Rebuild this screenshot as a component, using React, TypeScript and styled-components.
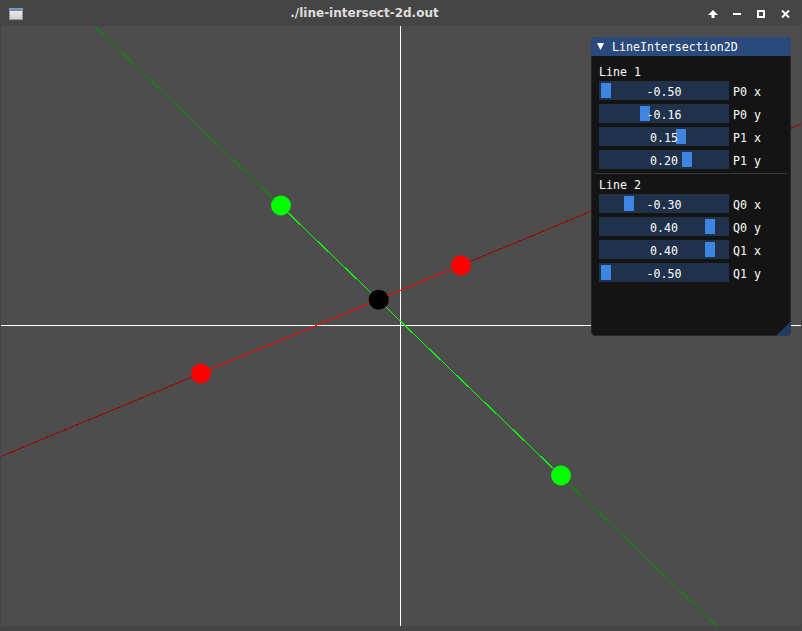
import React from "react";
import styled, { createGlobalStyle } from "styled-components";

const GlobalStyle = createGlobalStyle`
  html, body { margin: 0; padding: 0; background: #454545; overflow: hidden; }
  #root { width: 802px; height: 631px; }
  * { box-sizing: border-box; }
`;

const Window = styled.div`
  width: 802px;
  height: 631px;
  display: flex;
  flex-direction: column;
  background: #454545;
`;

const TitleBar = styled.div`
  height: 26px;
  display: grid;
  grid-template-columns: 28px 1fr auto;
  align-items: center;
  padding-right: 5px;
`;

const IconSlot = styled.div`
  display: flex;
  align-items: center;
  padding-left: 9px;
  height: 26px;
`;

const TitleText = styled.div`
  text-align: center;
  font-family: "DejaVu Sans", "Liberation Sans", sans-serif;
  font-weight: bold;
  font-size: 12px;
  color: #dedede;
  line-height: 26px;
  padding-bottom: 2px;
`;

const Buttons = styled.div`
  display: flex;
  height: 26px;
`;

const TitleButton = styled.div`
  width: 24px;
  height: 26px;
  display: flex;
  align-items: center;
  justify-content: center;
  padding-bottom: 1px;
`;

const Body = styled.div`
  display: flex;
  padding: 0 1px 5px 1px;
`;

const Canvas = styled.div`
  position: relative;
  width: 800px;
  height: 600px;
  background: #4d4d4d;
  overflow: hidden;
`;

const Plot = styled.svg`
  display: block;
  width: 800px;
  height: 600px;
`;

const Panel = styled.div`
  position: absolute;
  left: 590px;
  top: 11px;
  width: 200px;
  height: 299px;
  background: #141414;
  border-radius: 5px;
  overflow: hidden;
  display: flex;
  flex-direction: column;
  font-family: "DejaVu Sans Mono", "Liberation Mono", monospace;
  font-size: 11.6px;
  color: #ffffff;
  box-shadow: inset 0 0 0 1px #26262b;
`;

const PanelTitle = styled.div`
  height: 19px;
  background: #294a7a;
  display: flex;
  align-items: center;
  padding-left: 6px;
  gap: 8px;
  white-space: pre;
`;

const TitleLabel = styled.span`
  line-height: 19px;
  padding-top: 2px;
`;

const PanelContent = styled.div`
  display: flex;
  flex-direction: column;
  gap: 4px;
  padding: 8px 8px 0 8px;
`;

const SectionLabel = styled.div`
  height: 13px;
  line-height: 13px;
  padding-top: 2px;
  white-space: pre;
  overflow: visible;
`;

const Separator = styled.div`
  height: 1px;
  margin: 0 -4px -1px -4px;
  background: #37373d;
`;

const SliderRow = styled.div`
  display: flex;
  align-items: center;
  gap: 4px;
  height: 19px;
`;

const SliderFrame = styled.div`
  position: relative;
  width: 130px;
  height: 19px;
  background: #1f314b;
`;

const Grab = styled.div`
  position: absolute;
  top: 2px;
  width: 10px;
  height: 15px;
  background: #3d85e0;
`;

const SliderValue = styled.div`
  position: relative;
  text-align: center;
  height: 19px;
  line-height: 19px;
  padding-top: 2px;
  white-space: pre;
`;

const SliderLabel = styled.div`
  white-space: pre;
  height: 19px;
  line-height: 19px;
  padding-top: 2px;
`;

const ResizeGrip = styled.div`
  position: absolute;
  right: 0;
  bottom: 0;
  width: 0;
  height: 0;
  border-left: 15px solid transparent;
  border-bottom: 15px solid #223b5e;
`;

type SliderProps = { value: number; label: string };

const Slider: React.FC<SliderProps> = ({ value, label }) => {
  const t = (value + 0.5) / 1.0;
  const left = 2 + t * 116;
  return (
    <SliderRow>
      <SliderFrame>
        <Grab style={{ left: `${left}px` }} />
        <SliderValue>{value.toFixed(2)}</SliderValue>
      </SliderFrame>
      <SliderLabel>{label}</SliderLabel>
    </SliderRow>
  );
};

type V = { x: number; y: number };
const toX = (x: number) => 399.5 + x * 400;
const toY = (y: number) => 299.5 - y * 300;

const P0: V = { x: -0.5, y: -0.16 };
const P1: V = { x: 0.15, y: 0.2 };
const Q0: V = { x: -0.3, y: 0.4 };
const Q1: V = { x: 0.4, y: -0.5 };

function intersect(a: V, b: V, c: V, d: V): V {
  const r = { x: b.x - a.x, y: b.y - a.y };
  const s = { x: d.x - c.x, y: d.y - c.y };
  const den = r.x * s.y - r.y * s.x;
  const t = ((c.x - a.x) * s.y - (c.y - a.y) * s.x) / den;
  return { x: a.x + t * r.x, y: a.y + t * r.y };
}

const Extended: React.FC<{ a: V; b: V; color: string }> = ({ a, b, color }) => {
  const dx = b.x - a.x;
  const dy = b.y - a.y;
  return (
    <line
      x1={toX(a.x - 6 * dx)}
      y1={toY(a.y - 6 * dy)}
      x2={toX(a.x + 6 * dx)}
      y2={toY(a.y + 6 * dy)}
      stroke={color}
      strokeWidth={1}
      shapeRendering="crispEdges"
    />
  );
};

const Segment: React.FC<{ a: V; b: V; color: string }> = ({ a, b, color }) => (
  <line
    x1={toX(a.x)}
    y1={toY(a.y)}
    x2={toX(b.x)}
    y2={toY(b.y)}
    stroke={color}
    strokeWidth={1}
    shapeRendering="crispEdges"
  />
);

const Dot: React.FC<{ p: V; color: string }> = ({ p, color }) => (
  <circle cx={toX(p.x) + 0.5} cy={toY(p.y)} r={10} fill={color} />
);

export default function App() {
  const X = intersect(P0, P1, Q0, Q1);
  return (
    <>
      <GlobalStyle />
      <Window>
        <TitleBar>
          <IconSlot>
            <svg width="14" height="12" viewBox="0 0 14 12">
              <defs>
                <linearGradient id="ig" x1="0" y1="0" x2="0" y2="1">
                  <stop offset="0" stopColor="#f4f4f4" />
                  <stop offset="1" stopColor="#cfcfcf" />
                </linearGradient>
              </defs>
              <rect x="0.5" y="0.5" width="13" height="11" fill="url(#ig)" stroke="#9a9a9a" />
              <rect x="1" y="1" width="12" height="2" fill="#6a8cc4" />
            </svg>
          </IconSlot>
          <TitleText>./line-intersect-2d.out</TitleText>
          <Buttons>
            <TitleButton>
              <svg width="10" height="8" viewBox="0 0 10 8">
                <polygon points="5,0 10,5 6.5,5 6.5,8 3.5,8 3.5,5 0,5" fill="#ffffff" />
              </svg>
            </TitleButton>
            <TitleButton>
              <svg width="8" height="8" viewBox="0 0 8 8">
                <rect x="0" y="3" width="8" height="2" fill="#ffffff" />
              </svg>
            </TitleButton>
            <TitleButton>
              <svg width="8" height="8" viewBox="0 0 8 8">
                <rect x="1" y="1" width="6" height="6" fill="none" stroke="#ffffff" strokeWidth="2" />
              </svg>
            </TitleButton>
            <TitleButton>
              <svg width="9" height="8" viewBox="0 0 9 8">
                <path d="M1 0.5 L8 7.5 M8 0.5 L1 7.5" stroke="#ffffff" strokeWidth="2" />
              </svg>
            </TitleButton>
          </Buttons>
        </TitleBar>
        <Body>
          <Canvas>
            <Plot viewBox="0 0 800 600">
              <line x1={399.5} y1={0} x2={399.5} y2={600} stroke="#ffffff" strokeWidth={1} shapeRendering="crispEdges" />
              <line x1={0} y1={299.5} x2={800} y2={299.5} stroke="#ffffff" strokeWidth={1} shapeRendering="crispEdges" />
              <Extended a={Q0} b={Q1} color="#0a8a0a" />
              <Extended a={P0} b={P1} color="#a00000" />
              <Segment a={Q0} b={Q1} color="#00ff00" />
              <Segment a={P0} b={P1} color="#ff0000" />
              <Dot p={Q0} color="#00ff00" />
              <Dot p={Q1} color="#00ff00" />
              <Dot p={P0} color="#ff0000" />
              <Dot p={P1} color="#ff0000" />
              <Dot p={X} color="#000000" />
            </Plot>
            <Panel>
              <PanelTitle>
                <svg width="7" height="7" viewBox="0 0 7 7">
                  <polygon points="0,0 7,0 3.5,7" fill="#ffffff" />
                </svg>
                <TitleLabel>LineIntersection2D</TitleLabel>
              </PanelTitle>
              <PanelContent>
                <SectionLabel>Line 1</SectionLabel>
                <Slider value={P0.x} label="P0 x" />
                <Slider value={P0.y} label="P0 y" />
                <Slider value={P1.x} label="P1 x" />
                <Slider value={P1.y} label="P1 y" />
                <Separator />
                <SectionLabel>Line 2</SectionLabel>
                <Slider value={Q0.x} label="Q0 x" />
                <Slider value={Q0.y} label="Q0 y" />
                <Slider value={Q1.x} label="Q1 x" />
                <Slider value={Q1.y} label="Q1 y" />
              </PanelContent>
              <ResizeGrip />
            </Panel>
          </Canvas>
        </Body>
      </Window>
    </>
  );
}
